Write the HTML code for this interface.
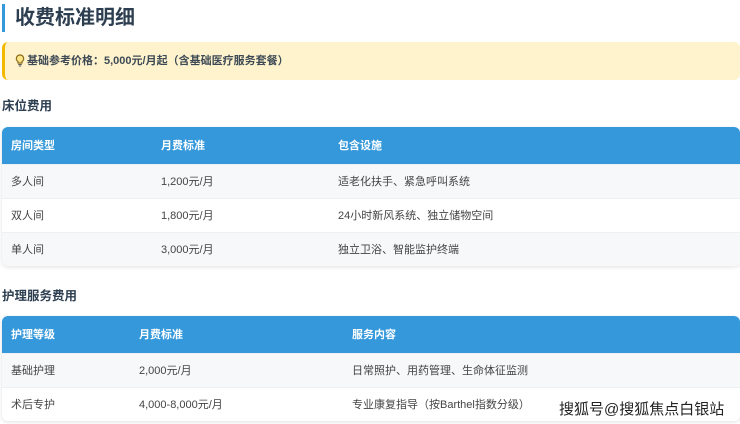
<!DOCTYPE html>
<html><head><meta charset="utf-8"><style>
*{margin:0;padding:0;box-sizing:border-box}
body{width:740px;height:424px;overflow:hidden;background:#fff;font-family:"Liberation Sans","Noto Sans CJK SC",sans-serif;color:#2c3e50;position:relative}
.title{position:absolute;left:2px;top:4px;height:28px;border-left:3px solid #3498db;padding-left:10px;font-size:20px;font-weight:bold;line-height:28px}
.alert{position:absolute;left:2px;top:42px;width:738px;height:38px;background:#fef3cd;border-left:3px solid #f5b800;border-radius:6px;font-size:11px;font-weight:bold;line-height:38px;padding-left:10px;color:#3d4a55}
.alert svg{vertical-align:-3px;margin-right:2px}
.h3{position:absolute;left:2px;font-size:12.5px;font-weight:bold}
table{position:absolute;left:2px;width:738px;border-collapse:collapse;border-radius:6px;overflow:hidden;box-shadow:0 1px 4px rgba(0,0,0,.12);font-size:11px}
th{background:#3498db;color:#fff;text-align:left;font-weight:bold;height:37px;padding-left:9px}
td{height:34px;padding-left:9px;color:#444;border-top:1px solid #eef0f2}
tr:nth-child(even) td{background:#f7f8fa}
.wm{position:absolute;left:559px;top:398px;font-size:15px;color:#222;text-shadow:0 0 2px #fff,0 0 2px #fff}
</style></head><body>
<div class="title">收费标准明细</div>
<div class="alert"><svg width="10" height="13" viewBox="0 0 10 13"><path d="M5 1a3.6 3.6 0 0 0-2 6.6V9h4V7.6A3.6 3.6 0 0 0 5 1z" fill="#fde68a" stroke="#8a6d1a" stroke-width="1.2"/><path d="M3.3 10.5h3.4M3.8 12h2.4" stroke="#555" stroke-width="1.1"/></svg>基础参考价格：5,000元/月起（含基础医疗服务套餐）</div>
<div class="h3" style="top:95px">床位费用</div>
<table style="top:127px">
<tr><th style="width:150px">房间类型</th><th style="width:177px">月费标准</th><th>包含设施</th></tr>
<tr><td>多人间</td><td>1,200元/月</td><td>适老化扶手、紧急呼叫系统</td></tr>
<tr><td>双人间</td><td>1,800元/月</td><td>24小时新风系统、独立储物空间</td></tr>
<tr><td>单人间</td><td>3,000元/月</td><td>独立卫浴、智能监护终端</td></tr>
</table>
<div class="h3" style="top:285px">护理服务费用</div>
<table style="top:316px">
<tr><th style="width:128px">护理等级</th><th style="width:213px">月费标准</th><th>服务内容</th></tr>
<tr><td>基础护理</td><td>2,000元/月</td><td>日常照护、用药管理、生命体征监测</td></tr>
<tr><td>术后专护</td><td>4,000-8,000元/月</td><td>专业康复指导（按Barthel指数分级）</td></tr>
</table>
<div class="wm">搜狐号@搜狐焦点白银站</div>
</body></html>
